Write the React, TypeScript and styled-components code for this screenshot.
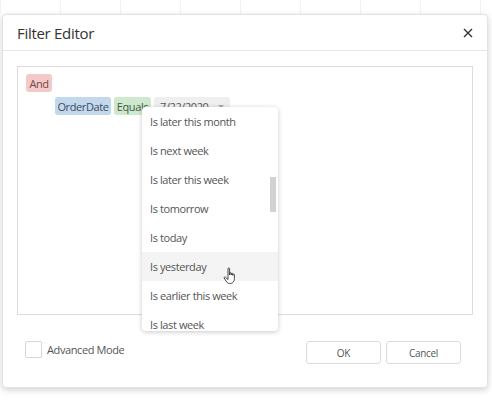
import React from 'react';
import styled, { createGlobalStyle } from 'styled-components';

const GlobalStyle = createGlobalStyle`
  body {
    margin: 0;
    background: #ffffff;
    font-family: "Open Sans", "Noto Sans", Arial, sans-serif;
    color: #444;
  }
`;

const Page = styled.div`
  width: 492px;
  height: 402px;
  padding: 14px 4px 0 2px;
  box-sizing: border-box;
  background-image: linear-gradient(to right, #f2f2f2 1px, transparent 1px);
  background-size: 60px 14px;
  background-repeat: repeat-x;
`;

const Dialog = styled.div`
  height: 374px;
  background: #fff;
  border: 1px solid #e3e3e3;
  border-radius: 4px;
  box-shadow: 0 2px 6px rgba(0, 0, 0, 0.18);
  box-sizing: border-box;
  display: flex;
  flex-direction: column;
`;

const Header = styled.div`
  height: 35px;
  border-bottom: 1px solid #e6e6e6;
  display: flex;
  align-items: center;
  justify-content: space-between;
  padding: 0 12px 0 14px;
`;

const Title = styled.div`
  font-size: 15px;
  letter-spacing: -0.3px;
  color: #333;
`;

const CloseButton = styled.button`
  border: none;
  background: none;
  padding: 0;
  width: 14px;
  height: 14px;
  display: flex;
  cursor: pointer;
`;

const Body = styled.div`
  padding: 15px 14px 0 14px;
`;

const TreeBox = styled.div`
  position: relative;
  height: 249px;
  border: 1px solid #dcdcdc;
  box-sizing: border-box;
  padding: 7px 8px;
  display: flex;
  flex-direction: column;
  gap: 5px;
`;

const Row = styled.div<{ $indent?: number }>`
  display: flex;
  gap: 3px;
  padding-left: ${p => p.$indent ?? 0}px;
`;

const Chip = styled.span<{ $bg: string; $fg: string; $w: number }>`
  display: inline-flex;
  align-items: center;
  justify-content: center;
  width: ${p => p.$w}px;
  height: 18px;
  border-radius: 3px;
  background: ${p => p.$bg};
  color: ${p => p.$fg};
  font-size: 11px;
  letter-spacing: -0.4px;
  overflow: hidden;
  white-space: nowrap;
`;

const DateEditor = styled.span`
  display: inline-flex;
  align-items: center;
  justify-content: space-between;
  width: 76px;
  height: 18px;
  padding: 0 6px 0 6px;
  box-sizing: border-box;
  border-radius: 3px;
  background: #efefef;
  color: #555;
  font-size: 11px;
  letter-spacing: -0.4px;
`;

const Caret = styled.span`
  width: 0;
  height: 0;
  border-left: 3px solid transparent;
  border-right: 3px solid transparent;
  border-top: 3px solid #aaa;
`;

const Dropdown = styled.div`
  position: absolute;
  left: 124px;
  top: 40px;
  width: 136px;
  height: 224px;
  background: #fff;
  border-radius: 4px;
  box-shadow: 0 1px 5px rgba(0, 0, 0, 0.22);
  overflow: hidden;
  z-index: 5;
`;

const Item = styled.div<{ $hover?: boolean }>`
  height: 29px;
  display: flex;
  align-items: center;
  padding-left: 8px;
  font-size: 11px;
  letter-spacing: -0.4px;
  color: #555;
  background: ${p => (p.$hover ? '#f4f4f4' : 'transparent')};
`;

const ScrollThumb = styled.div`
  position: absolute;
  right: 2px;
  top: 70px;
  width: 6px;
  height: 35px;
  background: #d2d2d2;
`;

const Cursor = styled.svg`
  position: absolute;
  left: 205px;
  top: 200px;
  z-index: 6;
`;

const Footer = styled.div`
  display: flex;
  align-items: flex-start;
  justify-content: space-between;
  padding: 26px 26px 0 22px;
`;

const CheckLabel = styled.label`
  display: flex;
  align-items: center;
  gap: 5px;
  font-size: 11px;
  letter-spacing: -0.4px;
  color: #555;
`;

const CheckBox = styled.span`
  width: 15px;
  height: 15px;
  border: 1px solid #d6d6d6;
  border-radius: 2px;
  background: #fff;
`;

const Buttons = styled.div`
  display: flex;
  gap: 5px;
`;

const Button = styled.button`
  width: 75px;
  height: 23px;
  border: 1px solid #dcdcdc;
  border-radius: 3px;
  background: #fff;
  font-family: inherit;
  font-size: 10px;
  letter-spacing: -0.3px;
  color: #555;
`;

const options = [
  'Is later this month',
  'Is next week',
  'Is later this week',
  'Is tomorrow',
  'Is today',
  'Is yesterday',
  'Is earlier this week',
  'Is last week',
];

export default function App() {
  return (
    <>
      <GlobalStyle />
      <Page>
        <Dialog>
          <Header>
            <Title>Filter Editor</Title>
            <CloseButton aria-label="Close">
              <svg width="14" height="14" viewBox="0 0 14 14">
                <path d="M3 3 L11 11 M11 3 L3 11" stroke="#333" strokeWidth="1.4" />
              </svg>
            </CloseButton>
          </Header>
          <Body>
            <TreeBox>
              <Row>
                <Chip $bg="#f6c9c9" $fg="#6e4a4a" $w={26}>And</Chip>
              </Row>
              <Row $indent={29}>
                <Chip $bg="#c3d8ec" $fg="#3f4c5c" $w={56}>OrderDate</Chip>
                <Chip $bg="#cfe9cf" $fg="#455a45" $w={37}>Equals</Chip>
                <DateEditor>
                  7/22/2020
                  <Caret />
                </DateEditor>
              </Row>
              <Dropdown>
                {options.map((o, i) => (
                  <Item key={o} $hover={i === 5}>{o}</Item>
                ))}
                <ScrollThumb />
              </Dropdown>
              <Cursor width="16" height="18" viewBox="0 0 16 18">
                <path
                  d="M5 1.5 C5 0.8 6.6 0.8 6.6 1.5 L6.6 8 L6.6 6.2 C6.6 5.5 8.2 5.5 8.2 6.2 L8.2 8 L8.2 6.8 C8.2 6.1 9.8 6.1 9.8 6.8 L9.8 8.4 L9.8 7.6 C9.8 6.9 11.4 6.9 11.4 7.6 L11.4 11.5 C11.4 14 10 16.5 7.5 16.5 L6.5 16.5 C4.8 16.5 4 15.5 3 14 L1.2 11 C0.8 10.2 1.8 9.5 2.5 10.2 L5 12.5 Z"
                  fill="#fff"
                  stroke="#333"
                  strokeWidth="0.9"
                  strokeLinejoin="round"
                />
              </Cursor>
            </TreeBox>
          </Body>
          <Footer>
            <CheckLabel>
              <CheckBox />
              Advanced Mode
            </CheckLabel>
            <Buttons>
              <Button>OK</Button>
              <Button>Cancel</Button>
            </Buttons>
          </Footer>
        </Dialog>
      </Page>
    </>
  );
}
